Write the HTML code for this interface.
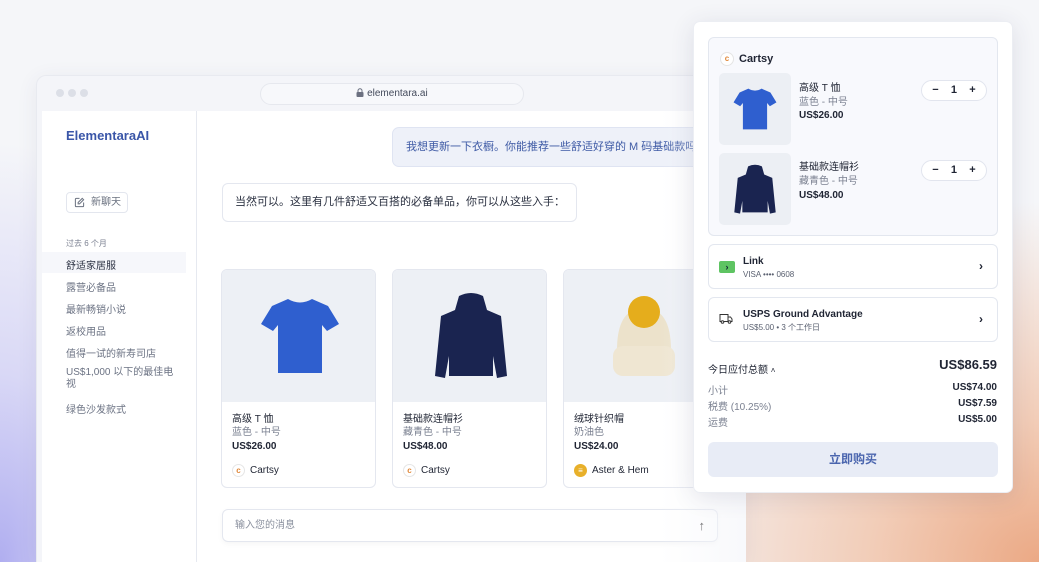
<!DOCTYPE html>
<html><head><meta charset="utf-8"><style>
*{box-sizing:border-box;margin:0;padding:0}
html{width:1039px;height:562px;overflow:hidden}
body{width:1039px;height:562px;overflow:hidden;position:relative;font-family:"Liberation Sans","Noto Sans CJK SC",sans-serif;color:#1f2433;
background:radial-gradient(ellipse 420px 360px at 1039px 562px,#eba985 0%,#f2cdb8 40%,rgba(246,240,240,0) 100%),radial-gradient(ellipse 200px 420px at 0px 562px,#b0aef0 0%,#d9d8f6 45%,rgba(245,245,250,0) 100%),#f5f6f9;}
.abs{position:absolute}
.win{left:36px;top:75px;width:710px;height:487px;background:#f4f5f9;border:1px solid #e8eaf0;border-bottom:none;border-radius:10px 10px 0 0;box-shadow:0 4px 20px rgba(60,60,100,.08)}
.dot{width:8px;height:8px;border-radius:50%;background:#dcdfe7;top:89px}
.url{left:260px;top:83px;width:264px;height:22px;border:1px solid #e6e8ee;border-radius:11px;background:#f7f8fb;font-size:10px;color:#444b5c;text-align:center;line-height:20px}
.inner{left:42px;top:111px;width:704px;height:451px;background:#fff}
.side{left:42px;top:111px;width:155px;height:451px;border-right:1px solid #e6e9f0}
.logo{left:66px;top:128px;font-size:13px;font-weight:bold;color:#3a56a8}
.newbtn{left:66px;top:192px;width:62px;height:21px;border:1px solid #e3e6ee;border-radius:4px;font-size:10px;color:#6b7280;line-height:19px;padding-left:24px}
.sec{left:66px;top:238px;font-size:8px;color:#7c8292}
.item{left:66px;font-size:10px;color:#6b7283}
.pill{left:42px;top:252px;width:144px;height:21px;background:#f6f7fb}
.ubub{left:392px;top:127px;width:330px;height:40px;background:#eef1f9;border:1px solid #dfe4f2;border-radius:7px;font-size:11px;color:#3e5aa5;line-height:38px;padding-left:13px;white-space:nowrap;overflow:hidden}
.abub{left:222px;top:183px;width:355px;height:39px;border:1px solid #e4e7ef;border-radius:6px;font-size:11px;color:#2a3040;line-height:37px;padding-left:12px}
.card{top:269px;width:155px;height:219px;border:1px solid #e4e7ef;border-radius:6px;overflow:hidden;background:#fff}
.card .img{height:132px;background:#edf0f5;position:relative}
.card .t{position:absolute;left:10px;font-size:10px}
.ci{display:inline-block;width:13px;height:13px;border-radius:50%;border:1px solid #e5e5e5;color:#e0883a;font-size:8px;font-weight:bold;text-align:center;line-height:11px;vertical-align:middle;margin-right:5px;background:#fff}
.inp{left:222px;top:509px;width:496px;height:33px;border:1px solid #e4e7ef;border-radius:6px;font-size:10px;color:#8a909e;line-height:31px;padding-left:12px;background:#fff;box-shadow:0 2px 6px rgba(0,0,0,.04)}
.fade{left:660px;top:111px;width:86px;height:451px;background:linear-gradient(90deg,rgba(255,255,255,0),rgba(245,246,250,.7))}
.panel{left:693px;top:21px;width:320px;height:472px;background:#fff;border-radius:7px;box-shadow:0 4px 24px rgba(50,50,90,.12);border:1px solid #eceef3}
.box{left:708px;width:290px;border:1px solid #e3e7ef;border-radius:6px;background:#fff}
.qty{width:66px;height:21px;border:1px solid #e2e5ee;border-radius:11px;background:#fff;font-size:11px;font-weight:bold;text-align:center;line-height:19px;left:921px}
.thumb{left:719px;width:72px;height:72px;background:#eceff4;border-radius:5px}
.sm{font-size:10px}
.chev{font-size:12px;font-weight:bold;left:979px}
</style></head><body>
<div class="abs win"></div>
<div class="abs dot" style="left:56px"></div><div class="abs dot" style="left:68px"></div><div class="abs dot" style="left:80px"></div>
<div class="abs url"><svg width="8" height="9" viewBox="0 0 8 9" style="vertical-align:-1px"><rect x="0.5" y="4" width="7" height="5" rx="1" fill="#6b7080"/><path d="M2 4V2.8a2 2 0 0 1 4 0V4" stroke="#6b7080" fill="none"/></svg> elementara.ai</div>
<div class="abs inner"></div>
<div class="abs side"></div>
<div class="abs logo">ElementaraAI</div>
<div class="abs newbtn"><svg class="abs" style="left:7px;top:4px" width="11" height="11" viewBox="0 0 12 12"><path d="M6 1.5H2.5a1 1 0 0 0-1 1v7a1 1 0 0 0 1 1h7a1 1 0 0 0 1-1V6M9 1.5l1.5 1.5-4.5 4.5H4.5V6z" stroke="#6b7280" fill="none" stroke-width="1.1"/></svg>新聊天</div>
<div class="abs sec">过去 6 个月</div>
<div class="abs pill"></div>
<div class="abs item" style="top:257px;color:#2b3142">舒适家居服</div>
<div class="abs item" style="top:279px">露营必备品</div>
<div class="abs item" style="top:301px">最新畅销小说</div>
<div class="abs item" style="top:323px">返校用品</div>
<div class="abs item" style="top:345px">值得一试的新寿司店</div>
<div class="abs item" style="top:367px;width:115px;line-height:12px">US$1,000 以下的最佳电视</div>
<div class="abs item" style="top:401px">绿色沙发款式</div>

<div class="abs ubub">我想更新一下衣橱。你能推荐一些舒适好穿的 M 码基础款吗？</div>
<div class="abs abub">当然可以。这里有几件舒适又百搭的必备单品，你可以从这些入手：</div>

<div class="abs card" style="left:221px"><div class="img"><svg class="abs" style="left:38px;top:26px" width="80" height="80" viewBox="0 0 80 80"><path d="M28 3 L12 10 L1 28 L13 35 L18 29 L18 77 L62 77 L62 29 L67 35 L79 28 L68 10 L52 3 Q40 10 28 3Z" fill="#2f5fcf"/></svg></div>
<div class="t" style="top:140px;color:#1f2433">高级 T 恤</div><div class="t" style="top:153px;color:#7a8090">蓝色 - 中号</div><div class="t" style="top:171px;font-weight:bold">US$26.00</div><div class="t" style="top:194px"><span class="ci">c</span>Cartsy</div></div>
<div class="abs card" style="left:392px"><div class="img"><svg class="abs" style="left:38px;top:22px" width="80" height="90" viewBox="0 0 80 90"><path d="M28 4 Q40 -2 52 4 L56 18 L70 24 L76 84 L66 86 L62 64 L62 84 L18 84 L18 64 L14 86 L4 84 L10 24 L24 18Z" fill="#1a2450"/></svg></div>
<div class="t" style="top:140px">基础款连帽衫</div><div class="t" style="top:153px;color:#7a8090">藏青色 - 中号</div><div class="t" style="top:171px;font-weight:bold">US$48.00</div><div class="t" style="top:194px"><span class="ci">c</span>Cartsy</div></div>
<div class="abs card" style="left:563px"><div class="img"><svg class="abs" style="left:45px;top:20px" width="70" height="92" viewBox="0 0 70 92"><path d="M8 60 Q8 18 35 18 Q62 18 62 60Z" fill="#ece2cb"/><rect x="4" y="56" width="62" height="30" rx="10" fill="#efe6d2"/><circle cx="35" cy="22" r="16" fill="#e5ad1c"/></svg></div>
<div class="t" style="top:140px">绒球针织帽</div><div class="t" style="top:153px;color:#7a8090">奶油色</div><div class="t" style="top:171px;font-weight:bold">US$24.00</div><div class="t" style="top:194px"><span class="ci" style="background:#e8b02a;border-color:#e8b02a;color:#fff">≡</span>Aster &amp; Hem</div></div>
<div class="abs inp">输入您的消息<span class="abs" style="right:12px;top:0;color:#333;font-size:13px">↑</span></div>
<div class="abs fade"></div>

<div class="abs panel"></div>
<div class="abs box" style="top:37px;height:199px;background:#f8f9fd"></div>
<div class="abs" style="left:720px;top:50px"><span class="ci" style="width:14px;height:14px">c</span><b style="font-size:11px;vertical-align:middle">Cartsy</b></div>
<div class="abs thumb" style="top:73px"><svg class="abs" style="left:14px;top:12px" width="44" height="48" viewBox="0 0 80 80"><path d="M28 3 L12 10 L1 28 L13 35 L18 29 L18 77 L62 77 L62 29 L67 35 L79 28 L68 10 L52 3 Q40 10 28 3Z" fill="#2f5fcf"/></svg></div>
<div class="abs sm" style="left:799px;top:79px">高级 T 恤</div><div class="abs sm" style="left:799px;top:93px;color:#7a8090">蓝色 - 中号</div><div class="abs sm" style="left:799px;top:110px;font-weight:bold">US$26.00</div>
<div class="abs qty" style="top:80px">−&nbsp;&nbsp;&nbsp;&nbsp;1&nbsp;&nbsp;&nbsp;&nbsp;+</div>
<div class="abs thumb" style="top:153px"><svg class="abs" style="left:13px;top:10px" width="46" height="54" viewBox="0 0 80 90"><path d="M28 4 Q40 -2 52 4 L56 18 L70 24 L76 84 L66 86 L62 64 L62 84 L18 84 L18 64 L14 86 L4 84 L10 24 L24 18Z" fill="#1a2450"/></svg></div>
<div class="abs sm" style="left:799px;top:158px">基础款连帽衫</div><div class="abs sm" style="left:799px;top:172px;color:#7a8090">藏青色 - 中号</div><div class="abs sm" style="left:799px;top:190px;font-weight:bold">US$48.00</div>
<div class="abs qty" style="top:160px">−&nbsp;&nbsp;&nbsp;&nbsp;1&nbsp;&nbsp;&nbsp;&nbsp;+</div>

<div class="abs box" style="top:244px;height:45px"></div>
<div class="abs" style="left:719px;top:261px;width:16px;height:12px;background:#5ec462;border-radius:2px;color:#123;font-size:9px;font-weight:bold;text-align:center;line-height:12px">›</div>
<div class="abs" style="left:743px;top:256px;font-size:10px;font-weight:bold">Link</div>
<div class="abs" style="left:743px;top:270px;font-size:8px;color:#5a6070">VISA •••• 0608</div>
<div class="abs chev" style="top:259px">›</div>
<div class="abs box" style="top:297px;height:45px"></div>
<svg class="abs" style="left:719px;top:313px" width="14" height="11" viewBox="0 0 14 11"><path d="M1 1.5h8v7H1zM9 4h2.5l1.5 2v2.5H9" stroke="#333" fill="none"/><circle cx="3.5" cy="9" r="1.3" fill="#fff" stroke="#333"/><circle cx="10.5" cy="9" r="1.3" fill="#fff" stroke="#333"/></svg>
<div class="abs" style="left:743px;top:309px;font-size:10px;font-weight:bold">USPS Ground Advantage</div>
<div class="abs" style="left:743px;top:322px;font-size:8px;color:#5a6070">US$5.00 • 3 个工作日</div>
<div class="abs chev" style="top:312px">›</div>

<div class="abs sm" style="left:708px;top:361px">今日应付总额 <span style="font-size:8px">˄</span></div>
<div class="abs" style="right:42px;top:357px;font-size:13px;font-weight:bold">US$86.59</div>
<div class="abs sm" style="left:708px;top:382px;color:#7a8090">小计</div><div class="abs sm" style="right:42px;top:382px;font-weight:bold">US$74.00</div>
<div class="abs sm" style="left:708px;top:398px;color:#7a8090">税费 (10.25%)</div><div class="abs sm" style="right:42px;top:398px;font-weight:bold">US$7.59</div>
<div class="abs sm" style="left:708px;top:414px;color:#7a8090">运费</div><div class="abs sm" style="right:42px;top:414px;font-weight:bold">US$5.00</div>
<div class="abs" style="left:708px;top:442px;width:290px;height:35px;background:#e8ecf6;border-radius:6px;text-align:center;line-height:35px;font-size:12px;color:#4a65ae;font-weight:bold">立即购买</div>
</body></html>
